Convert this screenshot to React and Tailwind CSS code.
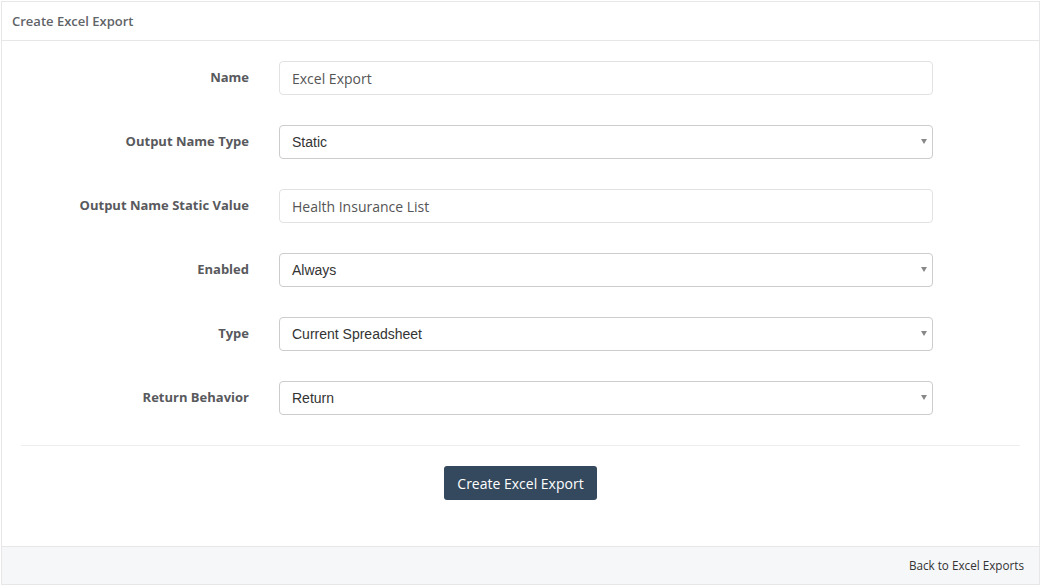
import React from "react"

const rows = [
  { label: "Name", value: "Excel Export", select: false },
  { label: "Output Name Type", value: "Static", select: true },
  { label: "Output Name Static Value", value: "Health Insurance List", select: false },
  { label: "Enabled", value: "Always", select: true },
  { label: "Type", value: "Current Spreadsheet", select: true },
  { label: "Return Behavior", value: "Return", select: true },
]

function Field({ row }) {
  return (
    <div className="flex items-start h-[34px]">
      <label className="w-[247px] pt-[7px] text-right text-[13px] leading-[18px] font-bold text-[#58595d]">
        {row.label}
      </label>
      <div className="ml-[30px] w-[654px] h-[34px] relative">
        {row.select ? (
          <div className="h-full w-full rounded-[4px] border border-[#cccccc] bg-white pl-[12px] flex items-center text-[14px] text-[#333333] font-['Liberation_Sans',Arial,sans-serif]">
            {row.value}
            <span className="absolute right-[6px] top-[14px] w-0 h-0 border-l-[3.5px] border-r-[3.5px] border-t-[5px] border-l-transparent border-r-transparent border-t-[#888888]" />
          </div>
        ) : (
          <div className="h-full w-full rounded-[4px] border border-[#e2e2e2] bg-white pl-[12px] flex items-center text-[14px] text-[#555555]">
            {row.value}
          </div>
        )}
      </div>
    </div>
  )
}

export default function App() {
  return (
    <div className="w-[1041px] h-[586px] bg-white pt-[1px] pl-[1px] font-['Open_Sans',sans-serif]">
      <div className="w-[1039px] h-[584px] border border-[#e7e7e9] flex flex-col">
        {/* Header */}
        <div className="h-[39px] border-b border-[#e7e7e9] px-[10px] pt-[2px] flex items-center">
          <span className="text-[13px] font-semibold text-[#5f6468]">Create Excel Export</span>
        </div>

        {/* Body */}
        <div className="flex-1 pt-[20px] px-[19px]">
          <div className="flex flex-col gap-[30px] -ml-[19px]">
            {rows.map((row) => (
              <Field key={row.label} row={row} />
            ))}
          </div>
          <div className="mt-[30px] border-t border-[#eeeeee]" />
          <div className="mt-[20px] flex justify-center">
            <button className="w-[153px] h-[34px] rounded-[3px] bg-[#34495e] text-white text-[14px]">
              Create Excel Export
            </button>
          </div>
        </div>

        {/* Footer */}
        <div className="h-[38px] border-t border-[#e7e7e9] bg-[#f6f7f9] flex items-center justify-end pr-[15px]">
          <span className="text-[11.7px] text-[#333333]">Back to Excel Exports</span>
        </div>
      </div>
    </div>
  )
}
